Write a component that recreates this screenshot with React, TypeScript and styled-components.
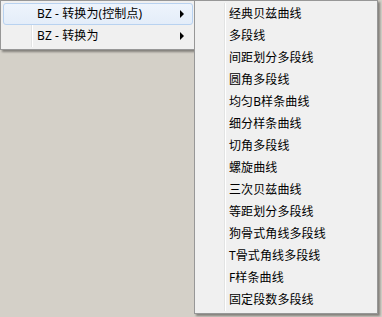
import styled, { createGlobalStyle } from "styled-components";

const GlobalStyle = createGlobalStyle`
  html, body {
    margin: 0;
    padding: 0;
    background: #d4d0c8;
  }
  body {
    font-family: "Noto Sans", "Noto Sans CJK SC", sans-serif;
    font-size: 12px;
    color: #000;
  }
`;

const Screen = styled.div`
  width: 382px;
  height: 317px;
  display: flex;
  align-items: flex-start;
  overflow: hidden;
`;

const Menu = styled.div<{ $width: number; $gutter: number; $top: number }>`
  position: relative;
  width: ${(p) => p.$width}px;
  margin-top: ${(p) => p.$top}px;
  box-sizing: border-box;
  padding: 2px;
  background: #f0f0f0;
  border: 1px solid #979797;
  box-shadow: 2px 2px 2px rgba(0, 0, 0, 0.38);
  display: flex;
  flex-direction: column;

  &::before {
    content: "";
    position: absolute;
    top: 2px;
    bottom: 2px;
    left: ${(p) => p.$gutter}px;
    width: 1px;
    background: #e2e3e3;
    border-right: 1px solid #ffffff;
  }
`;

const SubMenu = styled(Menu)`
  margin-left: -2px;
`;

const Item = styled.div<{ $active?: boolean; $indent: number }>`
  position: relative;
  height: 22px;
  box-sizing: border-box;
  display: flex;
  align-items: center;
  padding-left: ${(p) => p.$indent}px;
  padding-right: 8px;
  border: 1px solid ${(p) => (p.$active ? "#b8d2f0" : "transparent")};
  border-radius: 3px;
  background: ${(p) =>
    p.$active ? "linear-gradient(#eef4fc, #e4edf9)" : "transparent"};
  white-space: nowrap;
  z-index: 1;
`;

const Label = styled.span`
  flex: 1;
  line-height: 22px;
  letter-spacing: 0.1px;
`;

const Arrow = styled.span`
  width: 0;
  height: 0;
  border-top: 4px solid transparent;
  border-bottom: 4px solid transparent;
  border-left: 4px solid #000;
`;

const subItems = [
  "经典贝兹曲线",
  "多段线",
  "间距划分多段线",
  "圆角多段线",
  "均匀B样条曲线",
  "细分样条曲线",
  "切角多段线",
  "螺旋曲线",
  "三次贝兹曲线",
  "等距划分多段线",
  "狗骨式角线多段线",
  "T骨式角线多段线",
  "F样条曲线",
  "固定段数多段线",
];

export default function App() {
  return (
    <>
      <GlobalStyle />
      <Screen>
        <Menu $width={196} $gutter={30} $top={0}>
          <Item $active $indent={33}>
            <Label>BZ - 转换为(控制点)</Label>
            <Arrow />
          </Item>
          <Item $indent={33}>
            <Label>BZ - 转换为</Label>
            <Arrow />
          </Item>
        </Menu>
        <SubMenu $width={184} $gutter={29} $top={0}>
          {subItems.map((t) => (
            <Item key={t} $indent={31}>
              <Label>{t}</Label>
            </Item>
          ))}
        </SubMenu>
      </Screen>
    </>
  );
}
